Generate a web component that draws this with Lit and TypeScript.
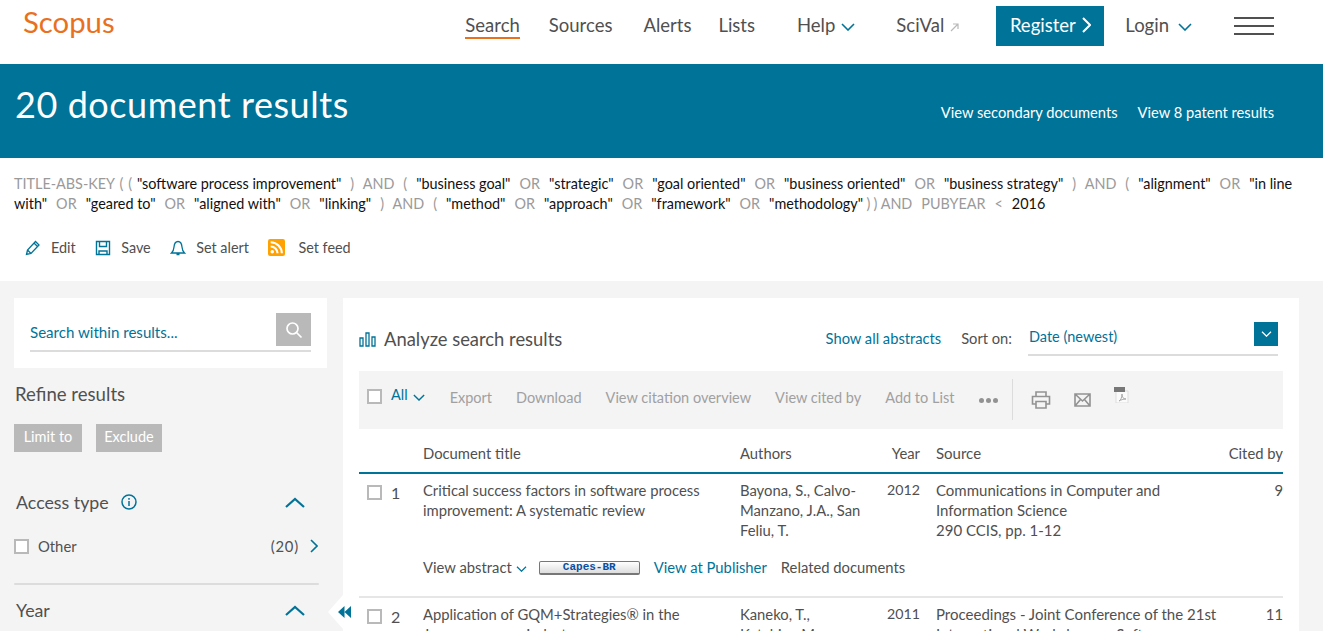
import { css, html, LitElement } from 'lit';
import { customElement } from 'lit/decorators.js';

const chevron = (cls: string) => html`<svg class=${cls} viewBox="0 0 14 8" fill="none" stroke="currentColor" stroke-width="1.6"><path d="M1 1l6 6 6-6" /></svg>`;
const chevronUp = html`<svg class="up" viewBox="0 0 20 11" fill="none" stroke="currentColor" stroke-width="2.2"><path d="M1 10l9-8 9 8" /></svg>`;

// b = quoted term, o = grey operator, t = grey operator with tighter spaces
const QUERY: [string, 'b' | 'o' | 't' | 'u'][] = [
  ['TITLE-ABS-KEY ( ( ', 't'], ['"software process improvement"', 'b'], [' ) AND ( ', 'o'],
  ['"business goal"', 'b'], [' OR ', 'o'], ['"strategic"', 'b'], [' OR ', 'o'],
  ['"goal oriented"', 'b'], [' OR ', 'o'], ['"business oriented"', 'b'], [' OR ', 'o'],
  ['"business strategy"', 'b'], [' ) AND ( ', 'o'], ['"alignment"', 'b'], [' OR ', 'o'],
  ['"in line with"', 'b'], [' OR ', 'o'], ['"geared to"', 'b'], [' OR ', 'o'],
  ['"aligned with"', 'b'], [' OR ', 'o'], ['"linking"', 'b'], [' ) AND ( ', 'o'],
  ['"method"', 'b'], [' OR ', 'o'], ['"approach"', 'b'], [' OR ', 'o'],
  ['"framework"', 'b'], [' OR ', 'o'], ['"methodology"', 'b'], [' ) ) ', 'u'], ['AND PUBYEAR < ', 'o'],
  ['2016', 'b'],
];

@customElement('app-root')
export class AppRoot extends LitElement {
  static override styles = css`
    :host {
      display: block;
      height: 631px;
      overflow: hidden;
      font-family: 'Lato', 'Liberation Sans', sans-serif;
      font-size: 14.8px;
      color: #505050;
      background: #f4f4f4;
    }
    a { color: inherit; text-decoration: none; }
    svg { display: block; flex: none; }

    .top {
      height: 64px;
      background: #fff;
      display: flex;
      align-items: flex-start;
      padding: 0 49px 0 23px;
    }
    .logo { font-size: 29.3px; line-height: 44px; color: #e9711c; }
    .nav { margin-left: auto; display: flex; align-items: flex-start; font-size: 18.5px; height: 46px; }
    .nav a { line-height: 24px; margin-top: 13px; display: flex; align-items: center; }
    .nav .on { border-bottom: 2px solid #e9711c; height: 25px; margin-top: 12px; }
    .nav .chev { width: 14px; height: 8px; color: #007398; margin: 3px 0 0 6px; }
    .nav .login .chev { margin-left: 9px; }
    .ext { width: 9px; height: 9px; color: #b9b9b9; margin: 4px 0 0 6px; }
    .nav .register {
      width: 108px;
      height: 40px;
      margin-top: 6px;
      padding-bottom: 2px;
      box-sizing: border-box;
      background: #007398;
      color: #fff;
      justify-content: center;
      gap: 6px;
    }
    .register svg { width: 9px; height: 16px; }
    .burger { width: 40px; margin: 17px 0 0 42px; display: flex; flex-direction: column; gap: 6px; }
    .burger i { display: block; height: 2px; background: #505050; }

    .hero {
      height: 94px;
      background: #007398;
      color: #fff;
      display: flex;
      align-items: flex-start;
      padding: 0 49px 0 15px;
    }
    .hero h1 { margin: 18px 0 0; font-size: 36px; line-height: 44px; font-weight: 400; letter-spacing: 0.55px; }
    .hero .links { margin: 38px 0 0 auto; display: flex; gap: 20px; font-size: 14.7px; line-height: 20px; height: 20px; }

    .query { height: 123px; background: #fff; padding: 16px 14px 0; box-sizing: border-box; }
    .query p { margin: 0; line-height: 20px; font-size: 14.4px; color: #9a9a9a; word-spacing: 5.3px; }
    .query b { font-weight: 400; color: #111; word-spacing: 0; }
    .query .t { word-spacing: 1.2px; }
    .query .u { word-spacing: -0.4px; }
    .acts { display: flex; margin: 25px 0 0 11px; align-items: center; font-size: 14.4px; }
    .acts a { display: flex; align-items: center; gap: 10px; margin-right: 19.5px; }
    .acts svg { width: 16px; height: 16px; color: #007398; }
    .acts .feed { width: 17px; height: 17px; margin-right: 3px; }

    .main { display: flex; align-items: flex-start; padding: 17px 24px 0 14px; gap: 16px; position: relative; }
    .side { width: 313px; flex: none; }
    .find { height: 70px; background: #fff; padding: 15px 16px 0; box-sizing: border-box; }
    .find .inp { display: flex; align-items: flex-start; justify-content: space-between; border-bottom: 2px solid #dcdcdc; height: 37px; }
    .find span { color: #007398; line-height: 20px; margin-top: 9px; font-size: 15.1px; }
    .find .go { width: 35px; height: 33px; background: #b9b9b9; display: flex; align-items: center; justify-content: center; }
    .find .go svg { width: 18px; height: 18px; color: #fff; }
    .side h2 { margin: 13px 0 0 1px; font-size: 18.6px; line-height: 26px; font-weight: 400; }
    .pills { display: flex; gap: 14px; margin-top: 17px; }
    .pills span { height: 28px; line-height: 26px; width: 68px; text-align: center; background: #b9b9b9; color: #fff; font-size: 14.5px; }
    .pills span + span { width: 66px; }
    .facet { display: flex; align-items: center; margin-left: 2px; font-size: 17.8px; line-height: 26px; width: 303px; }
    .facet.first { margin-top: 37px; }
    .facet .info { width: 16px; height: 16px; color: #007398; margin-left: 12px; }
    .facet .up { width: 20px; height: 11px; color: #007398; margin-left: auto; margin-right: 14px; }
    .opt { display: flex; align-items: center; margin-top: 21px; width: 304px; line-height: 20px; }
    .box { width: 11px; height: 11px; border: 2px solid #b9b9b9; background: #fff; flex: none; }
    .opt .box { margin-right: 9px; }
    .opt .n { margin-left: auto; margin-right: 11px; letter-spacing: 0.8px; }
    .opt svg { width: 8px; height: 14px; color: #007398; }
    .rule { width: 305px; height: 2px; background: #dcdcdc; margin: 27px 0 12px; border-radius: 2px; }

    .panel { width: 956px; flex: none; height: 420px; background: #fff; padding: 24px 16px 0; box-sizing: border-box; position: relative; }
    .tab {
      position: absolute;
      left: -15px;
      top: 297px;
      width: 15px;
      height: 34px;
      background: #fff;
      clip-path: polygon(100% 0, 0 50%, 100% 100%);
    }
    .back { position: absolute; left: -5px; top: 308px; width: 13px; height: 12px; color: #007398; }
    .head { display: flex; align-items: flex-start; height: 49px; }
    .head .an { width: 17px; height: 15px; color: #007398; margin: 10px 8px 0 0; }
    .head h3 { margin: 4px 0 0; font-size: 18.4px; line-height: 26px; font-weight: 400; }
    .head .all { margin: 6px 0 0 auto; color: #007398; line-height: 20px; font-size: 14.7px; }
    .head .so { margin: 6px 0 0 20px; line-height: 20px; font-size: 14.7px; }
    .sel { width: 249px; height: 32px; margin: 0 5px 0 16px; border-bottom: 2px solid #dcdcdc; display: flex; justify-content: space-between; color: #007398; line-height: 20px; padding-left: 1px; font-size: 14.5px; }
    .sel span { margin-top: 5px; }
    .sel i { width: 24px; height: 24px; background: #007398; color: #fff; display: flex; align-items: center; justify-content: center; }
    .sel svg { width: 11px; height: 6px; }

    .bar { height: 58px; background: #f4f4f4; display: flex; align-items: flex-start; color: #a0a0a0; padding-left: 8px; font-size: 14.5px; }
    .bar .box { margin-top: 18px; }
    .bar .every { color: #007398; margin: 14px 0 0 9px; line-height: 20px; display: flex; align-items: center; gap: 5px; }
    .bar .every svg { width: 12px; height: 7px; margin-top: 4px; }
    .bar .cmds { display: flex; gap: 24px; margin: 17px 0 0 25px; line-height: 20px; }
    .dots { display: flex; gap: 2px; margin: 27px 0 0 25px; }
    .dots i { width: 5px; height: 5px; border-radius: 50%; background: #929292; }
    .sep { width: 1px; height: 41px; background: #dcdcdc; margin: 8px 0 0 14px; }
    .print { width: 20px; height: 18px; color: #929292; margin: 20px 0 0 18px; }
    .mail { width: 17px; height: 14px; color: #929292; margin: 22px 0 0 23px; }
    .pdf { width: 16px; height: 16px; margin: 16px 0 0 22px; }

    .cols { display: grid; grid-template-columns: 32px 32px 317px 125px 55px 16px 1fr 60px; align-content: start; }
    .ths { height: 45px; border-bottom: 2px solid #007398; box-sizing: border-box; line-height: 20px; padding-top: 14px; }
    .num { text-align: right; }
    .yr { font-size: 14.2px; }
    .src { grid-column: 7; font-size: 15px; }
    .row { line-height: 20px; padding-top: 6px; height: 124px; box-sizing: border-box; border-bottom: 2px solid #e6e6e6; }
    .row .box { margin: 5px 0 0 8px; }
    .row .idx { font-size: 16px; margin-top: 3px; }
    .links { grid-column: 3 / -1; display: flex; align-items: center; margin-top: 17px; height: 20px; }
    .links .ab { display: flex; align-items: center; gap: 4px; }
    .links .ab svg { width: 11px; height: 6px; color: #007398; margin-top: 4px; }
    .capes {
      width: 101px;
      height: 14px;
      margin: 2px 14px 0 12px;
      box-sizing: border-box;
      border: 1px solid #777;
      border-bottom-width: 2px;
      border-radius: 2px;
      background: linear-gradient(#fff, #ddd);
      color: #0b4ea2;
      font: 700 11px/11px 'Liberation Mono', monospace;
      text-align: center;
    }
    .links .pub { color: #007398; margin-right: 14px; }
  `;

  private row(n: number, title: string, authors: string, year: string, source: string, cited: string, links = false) {
    return html`
      <div class="row cols">
        <div><div class="box"></div></div>
        <div class="idx">${n}</div>
        <div>${title}</div>
        <div>${authors}</div>
        <div class="num yr">${year}</div>
        <div class="src">${source.split('|').map((l) => html`${l}<br />`)}</div>
        <div class="num">${cited}</div>
        ${links
          ? html`<div class="links">
              <a class="ab">View abstract ${chevron('')}</a>
              <div class="capes">Capes-BR</div>
              <a class="pub">View at Publisher</a>
              <a>Related documents</a>
            </div>`
          : ''}
      </div>
    `;
  }

  override render() {
    return html`
      <header class="top">
        <a class="logo">Scopus</a>
        <nav class="nav">
          <a class="on">Search</a>
          <a style="margin-left:29px">Sources</a>
          <a style="margin-left:31px">Alerts</a>
          <a style="margin-left:27px">Lists</a>
          <a style="margin-left:42px">Help${chevron('chev')}</a>
          <a style="margin-left:41px">SciVal<svg class="ext" viewBox="0 0 9 9" fill="none" stroke="currentColor" stroke-width="1.2"><path d="M1 8l7-7M3 1h5v5" /></svg></a>
          <a class="register" style="margin-left:37px">Register<svg viewBox="0 0 9 16" fill="none" stroke="currentColor" stroke-width="2"><path d="M1 1l7 7-7 7" /></svg></a>
          <a class="login" style="margin-left:21px">Login${chevron('chev')}</a>
          <div class="burger"><i></i><i></i><i></i></div>
        </nav>
      </header>

      <section class="hero">
        <h1>20 document results</h1>
        <div class="links"><a>View secondary documents</a><a>View 8 patent results</a></div>
      </section>

      <section class="query">
        <p>${QUERY.map(([t, k]) => (k === 'b' ? html`<b>${t}</b>` : k === 'o' ? t : html`<span class=${k}>${t}</span>`))}</p>
        <div class="acts">
          <a><svg viewBox="0 0 16 16" fill="none" stroke="currentColor" stroke-width="1.3"><path d="M1.5 14.5l1-4.5 8-8.5 3.5 3.5-8 8.5zM2.5 10l3.5 3.5M9 3l3.5 3.5" /></svg>Edit</a>
          <a><svg viewBox="0 0 16 16" fill="none" stroke="currentColor" stroke-width="1.4"><path d="M1.5 1.5h13v13h-13zM4.5 1.5v5h7v-5M4 14.5v-3.5h8v3.5" /></svg>Save</a>
          <a><svg viewBox="0 0 16 16" fill="none" stroke="currentColor" stroke-width="1.3"><path d="M1.5 13h13c-1.5-1.5-2.3-2.500-2.500-6C11.700 3.500 10 1.500 8 1.500S4.300 3.500 4 7c-.2 3.500-1 4.500-2.500 6zM6.500 14.500h3" /></svg>Set alert</a>
          <a><svg class="feed" viewBox="0 0 16 16"><rect width="16" height="16" rx="2" fill="#ffa100" /><circle cx="4" cy="12" r="1.700" fill="#fff" /><path d="M2.500 7a6.500 6.500 0 0 1 6.500 6.500M2.500 3a10.500 10.500 0 0 1 10.500 10.500" fill="none" stroke="#fff" stroke-width="2" /></svg>Set feed</a>
        </div>
      </section>

      <main class="main">
        <aside class="side">
          <div class="find">
            <div class="inp">
              <span>Search within results...</span>
              <div class="go"><svg viewBox="0 0 18 18" fill="none" stroke="currentColor" stroke-width="1.700"><circle cx="7.500" cy="7.500" r="5.500" /><path d="M11.500 11.500l5 5" /></svg></div>
            </div>
          </div>
          <h2>Refine results</h2>
          <div class="pills"><span>Limit to</span><span>Exclude</span></div>
          <div class="facet first">Access type
            <svg class="info" viewBox="0 0 16 16" fill="none" stroke="currentColor" stroke-width="1.500"><circle cx="8" cy="8" r="7" /><path d="M8 7v5M8 4v1.800" /></svg>
            ${chevronUp}
          </div>
          <div class="opt">
            <div class="box"></div>Other
            <span class="n">(20)</span>
            <svg viewBox="0 0 8 14" fill="none" stroke="currentColor" stroke-width="1.600"><path d="M1 1l6 6-6 6" /></svg>
          </div>
          <div class="rule"></div>
          <div class="facet">Year ${chevronUp}</div>
        </aside>

        <section class="panel">
          <div class="tab"></div>
          <svg class="back" viewBox="0 0 13 12" fill="currentColor"><path d="M6.500 0v12L0 6zM13 0v12L6.500 6z" /></svg>
          <div class="head">
            <svg class="an" viewBox="0 0 17 15" fill="none" stroke="currentColor" stroke-width="1.300"><path d="M1 6h3v8H1zM7 1h3v13H7zM13 5h3v9h-3z" /></svg>
            <h3>Analyze search results</h3>
            <a class="all">Show all abstracts</a>
            <span class="so">Sort on:</span>
            <div class="sel"><span>Date (newest)</span><i>${chevron('')}</i></div>
          </div>

          <div class="bar">
            <div class="box"></div>
            <a class="every">All ${chevron('')}</a>
            <div class="cmds"><a>Export</a><a>Download</a><a>View citation overview</a><a>View cited by</a><a>Add to List</a></div>
            <div class="dots"><i></i><i></i><i></i></div>
            <div class="sep"></div>
            <svg class="print" viewBox="0 0 20 18" fill="none" stroke="currentColor" stroke-width="1.600"><path d="M5 5V1h10v4M5 13H1.500V5.500h17V13H15M5 10.500h10V17H5z" /></svg>
            <svg class="mail" viewBox="0 0 17 14" fill="none" stroke="currentColor" stroke-width="1.600"><path d="M1 1h15v12H1zM1 1l7.500 7L16 1M1 13l5.500-6.500M16 13l-5.500-6.500" /></svg>
            <svg class="pdf" viewBox="0 0 16 16"><path d="M3 4h12v12H3z" fill="#fbfbfb" stroke="#ddd" /><path d="M1 0h11v5H1z" fill="#777" /><path d="M6 14c2-1 3-4 3-7 0 3 1 5 4 5-3 0-5 1-7 2z" fill="none" stroke="#aaa" /></svg>
          </div>

          <div class="ths cols">
            <div></div><div></div>
            <div>Document title</div>
            <div>Authors</div>
            <div class="num">Year</div>
            <div class="src">Source</div>
            <div class="num">Cited by</div>
          </div>
          ${this.row(1, 'Critical success factors in software process improvement: A systematic review', 'Bayona, S., Calvo-Manzano, J.A., San Feliu, T.', '2012', 'Communications in Computer and|Information Science|290 CCIS, pp. 1-12', '9', true)}
          ${this.row(2, 'Application of GQM+Strategies® in the Japanese space industry', 'Kaneko, T., Katahira, M.,', '2011', 'Proceedings - Joint Conference of the 21st|International Workshop on Software', '11')}
        </section>
      </main>
    `;
  }
}
